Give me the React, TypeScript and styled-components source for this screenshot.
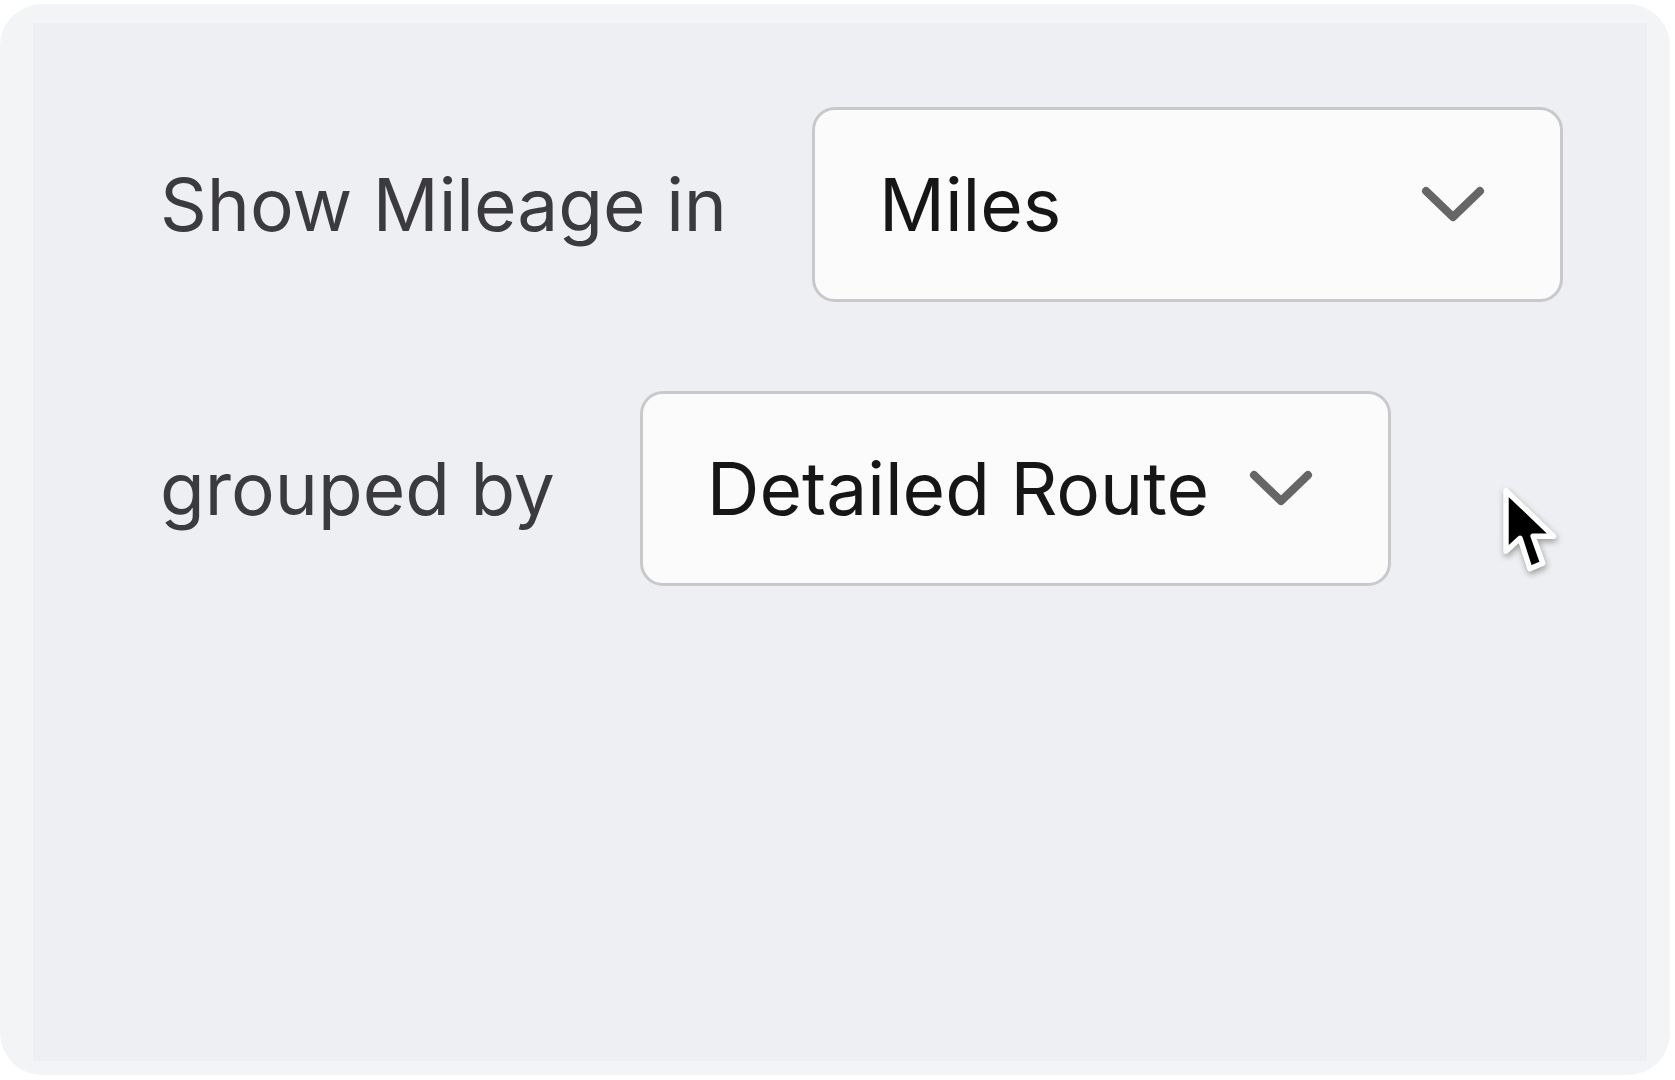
import React from 'react'
import styled, { createGlobalStyle } from 'styled-components'

const GlobalStyle = createGlobalStyle`
  html, body {
    margin: 0;
    padding: 0;
    background: #ffffff;
  }
  body {
    font-family: Inter, "Noto Sans", "Liberation Sans", sans-serif;
    -webkit-font-smoothing: antialiased;
  }
`

const Page = styled.div`
  width: 1675px;
  height: 1080px;
  padding-top: 4px;
  box-sizing: border-box;
`

const Card = styled.div`
  position: relative;
  width: 1670px;
  height: 1071px;
  box-sizing: border-box;
  border-radius: 42px;
  background: #f3f4f6;
  padding: 19px 23px 14px 33px;
  display: flex;
`

const Panel = styled.div`
  flex: 1;
  background: #eeeff2;
  display: flex;
  flex-direction: column;
  gap: 89px;
  padding: 84px 0 0 127px;
`

const Row = styled.div`
  display: flex;
  align-items: center;
  gap: 85px;
`

const Label = styled.span`
  font-family: Inter, "Noto Sans", sans-serif;
  font-size: 73px;
  font-weight: 400;
  color: #3b3b3f;
  white-space: nowrap;
`

const Select = styled.button`
  width: 751px;
  height: 195px;
  box-sizing: border-box;
  border: 3px solid #c9c9cc;
  border-radius: 23px;
  background: #fbfbfb;
  display: flex;
  align-items: center;
  justify-content: space-between;
  padding: 0 74px 0 64px;
  cursor: pointer;
  font-family: Inter, "Noto Sans", sans-serif;
`

const Value = styled.span`
  font-size: 73px;
  font-weight: 400;
  color: #161616;
  white-space: nowrap;
`

const Chevron = () => (
  <svg width="66" height="40" viewBox="0 0 66 40">
    <polyline
      points="6,6 33,32 60,6"
      fill="none"
      stroke="#666666"
      strokeWidth="8"
      strokeLinecap="round"
      strokeLinejoin="round"
    />
  </svg>
)

const Pointer = styled.svg`
  position: absolute;
  left: 1497px;
  top: 478px;
  filter: drop-shadow(1px 3px 3px rgba(0, 0, 0, 0.35));
`

const Cursor = () => (
  <Pointer width="70" height="104" viewBox="-8 -8 64 96">
    <path
      d="M0 0 L0 56 L13 44 L22 72 L34 67 L25 42 L44 42 Z"
      fill="#000"
      stroke="#fff"
      strokeWidth="5"
      strokeLinejoin="round"
    />
  </Pointer>
)

const Dropdown = ({ value }: { value: string }) => (
  <Select type="button">
    <Value>{value}</Value>
    <Chevron />
  </Select>
)

export default function App() {
  return (
    <>
      <GlobalStyle />
      <Page>
        <Card>
          <Panel>
            <Row>
              <Label>Show Mileage in</Label>
              <Dropdown value="Miles" />
            </Row>
            <Row>
              <Label>grouped by</Label>
              <Dropdown value="Detailed Route" />
            </Row>
          </Panel>
          <Cursor />
        </Card>
      </Page>
    </>
  )
}
